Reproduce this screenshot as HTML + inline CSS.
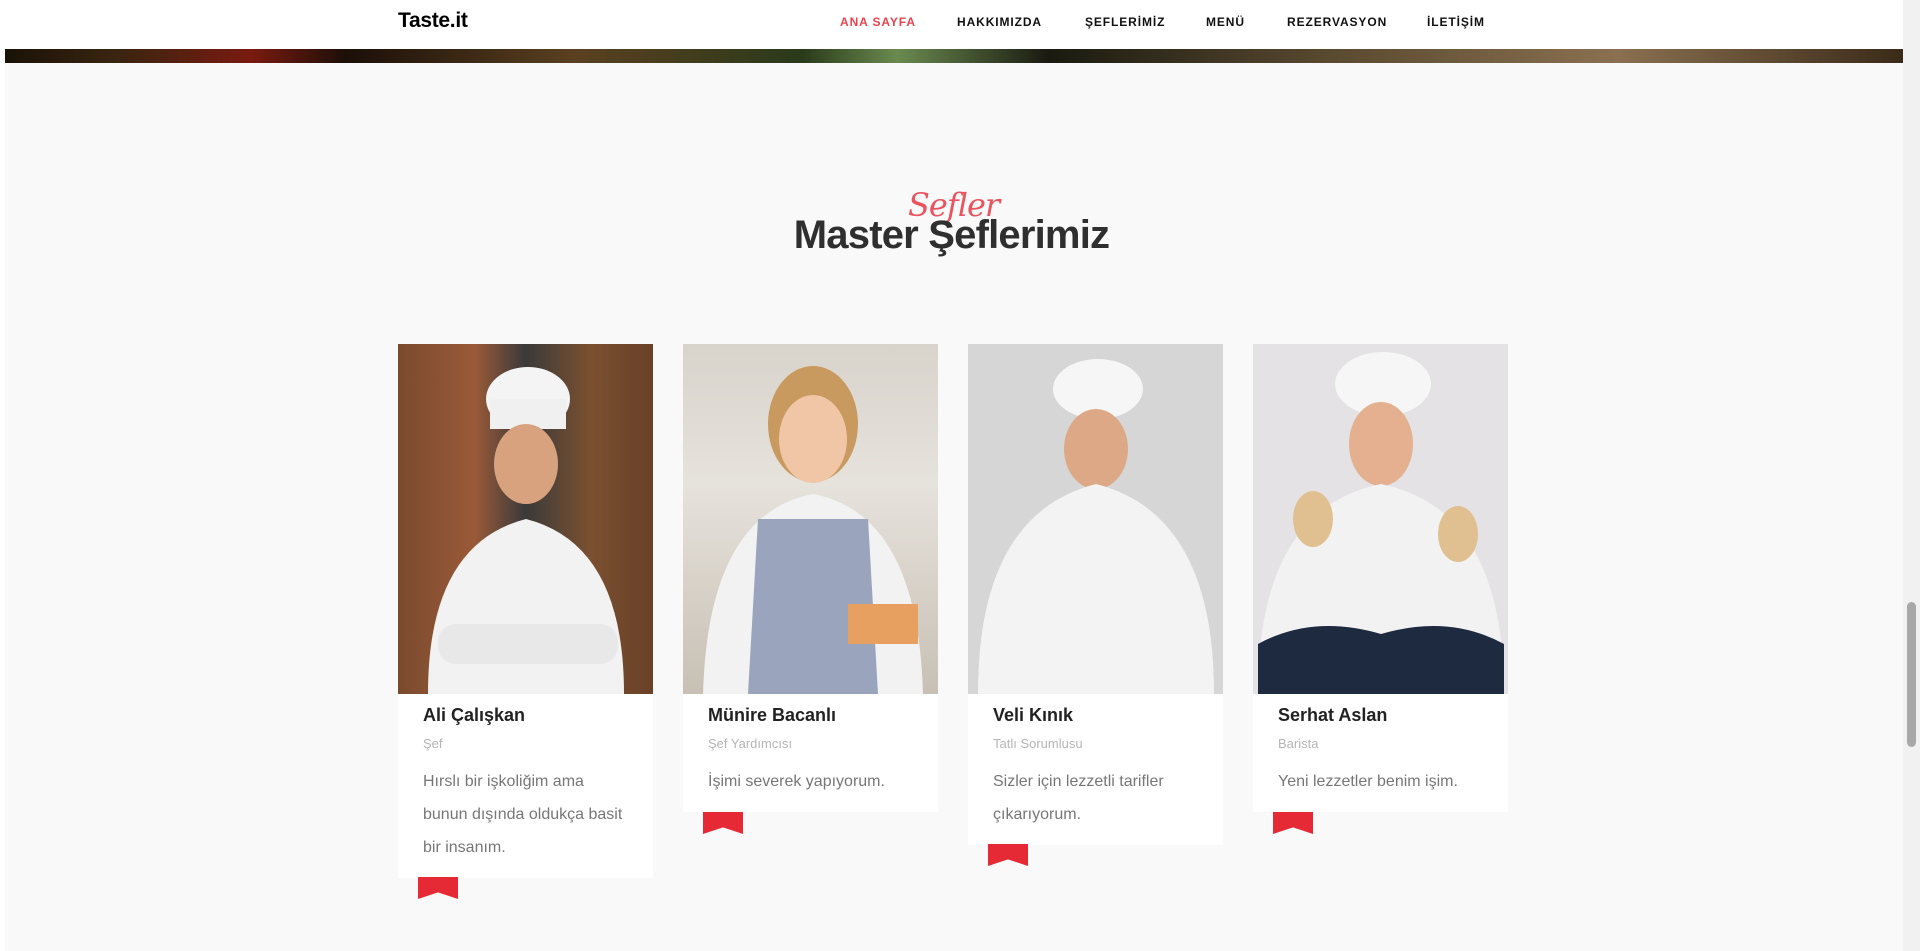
<!DOCTYPE html>
<html><head><meta charset="utf-8">
<style>
*{margin:0;padding:0;box-sizing:border-box}
html,body{width:1920px;height:951px;overflow:hidden;background:#f9f9f9;font-family:"Liberation Sans",Arial,sans-serif}
.sb{position:absolute;right:0;top:0;width:17px;height:951px;background:#f1f1f1}
.sb i{position:absolute;left:4px;top:602px;width:9px;height:145px;background:#a8a8a8;border-radius:5px}
.nav{position:absolute;left:0;top:0;width:1903px;height:49px;background:#fff}
.logo{position:absolute;left:398px;top:9px;font-size:21px;font-weight:bold;color:#000;letter-spacing:-0.3px}
.menu{position:absolute;top:15px;font-size:12px;font-weight:bold;letter-spacing:0.9px;color:#111}
.hero{position:absolute;left:5px;top:49px;width:1898px;height:14px;background:linear-gradient(90deg,#1a1208 0%,#3a2510 6%,#7a1a10 13%,#1b0f08 18%,#5a4020 30%,#2a3a1a 42%,#6a8a50 47%,#1a1a10 55%,#5a4a30 70%,#8a7050 85%,#3a2a18 100%)}
.strip{position:absolute;left:0;top:0;width:5px;height:951px;background:#fff}
h2{position:absolute;left:0;width:1903px;top:213px;text-align:center;font-size:40px;font-weight:bold;color:#2f2f2f;letter-spacing:-0.8px}
.scr{position:absolute;left:908px;top:186px;font-family:"DejaVu Serif",serif;font-style:italic;font-size:32px;color:#e8434e;opacity:.9;letter-spacing:-1px}
.card{position:absolute;top:344px;width:255px;background:#fff}
.img{height:350px;position:relative;overflow:hidden}
.name{font-size:18px;font-weight:bold;color:#222;margin:11px 0 0 25px}
.role{font-size:13px;color:#b5b5b5;margin:10px 0 0 25px}
.txt{font-size:16px;color:#777;line-height:33px;margin:14px 0 0 25px;padding-bottom:14px;white-space:nowrap}
.rib{position:absolute;left:20px;width:40px;height:22px;background:#e52a35;clip-path:polygon(0 0,100% 0,100% 100%,50% 70%,0 100%)}
</style></head><body>
<div class="strip"></div>
<div class="nav">
<div class="logo">Taste.it</div>
<div class="menu" style="left:840px;color:#e8434e">ANA SAYFA</div>
<div class="menu" style="left:957px">HAKKIMIZDA</div>
<div class="menu" style="left:1085px">ŞEFLERİMİZ</div>
<div class="menu" style="left:1206px">MENÜ</div>
<div class="menu" style="left:1287px">REZERVASYON</div>
<div class="menu" style="left:1427px">İLETİŞİM</div>
</div>
<div class="hero"></div>
<div class="scr">Sefler</div>
<h2>Master Şeflerimiz</h2>

<div class="card" style="left:398px">
<div class="img" style="background:linear-gradient(90deg,#7a4a2e,#9a5a38 30%,#3a3a3a 50%,#7a5030 75%,#6a4028)">
<svg width="255" height="350"><ellipse cx="130" cy="55" rx="42" ry="32" fill="#f4f4f4"/><rect x="92" y="55" width="76" height="30" fill="#f0f0f0"/><ellipse cx="128" cy="120" rx="32" ry="40" fill="#d9a27f"/><path d="M30 350 Q30 200 128 175 Q226 200 226 350Z" fill="#f2f2f2"/><rect x="40" y="280" width="180" height="40" rx="18" fill="#e8e8e8"/></svg>
</div>
<div class="name">Ali Çalışkan</div><div class="role">Şef</div>
<div class="txt">Hırslı bir işkoliğim ama<br>bunun dışında oldukça basit<br>bir insanım.</div>
<div class="rib" style="top:533px"></div>
</div>

<div class="card" style="left:683px">
<div class="img" style="background:linear-gradient(180deg,#d8d4cc,#e6e2dc 40%,#c8c0b4)">
<svg width="255" height="350"><ellipse cx="130" cy="80" rx="45" ry="58" fill="#c89a60"/><ellipse cx="130" cy="95" rx="34" ry="44" fill="#f0c6a6"/><path d="M20 350 Q25 170 130 150 Q235 170 240 350Z" fill="#f2f2f2"/><path d="M75 175 L185 175 L195 350 L65 350Z" fill="#9aa4bc"/><rect x="165" y="260" width="70" height="40" fill="#e8a060"/></svg>
</div>
<div class="name">Münire Bacanlı</div><div class="role">Şef Yardımcısı</div>
<div class="txt">İşimi severek yapıyorum.</div>
<div class="rib" style="top:468px"></div>
</div>

<div class="card" style="left:968px">
<div class="img" style="background:#d6d6d6">
<svg width="255" height="350"><ellipse cx="130" cy="45" rx="45" ry="30" fill="#f6f6f6"/><ellipse cx="128" cy="105" rx="32" ry="40" fill="#dca886"/><path d="M10 350 Q10 170 128 140 Q246 170 246 350Z" fill="#f3f3f3"/></svg>
</div>
<div class="name">Veli Kınık</div><div class="role">Tatlı Sorumlusu</div>
<div class="txt">Sizler için lezzetli tarifler<br>çıkarıyorum.</div>
<div class="rib" style="top:500px"></div>
</div>

<div class="card" style="left:1253px">
<div class="img" style="background:#e4e2e4">
<svg width="255" height="350"><ellipse cx="130" cy="40" rx="48" ry="32" fill="#f6f6f6"/><ellipse cx="128" cy="100" rx="32" ry="42" fill="#e4b090"/><path d="M5 350 Q5 165 128 140 Q251 165 251 350Z" fill="#f2f2f2"/><path d="M5 300 Q60 270 128 290 Q196 270 251 300 L251 350 L5 350Z" fill="#1e2a40"/><ellipse cx="60" cy="175" rx="20" ry="28" fill="#e0c090"/><ellipse cx="205" cy="190" rx="20" ry="28" fill="#e0c090"/></svg>
</div>
<div class="name">Serhat Aslan</div><div class="role">Barista</div>
<div class="txt">Yeni lezzetler benim işim.</div>
<div class="rib" style="top:468px"></div>
</div>

<div class="sb"><i></i></div>
</body></html>
